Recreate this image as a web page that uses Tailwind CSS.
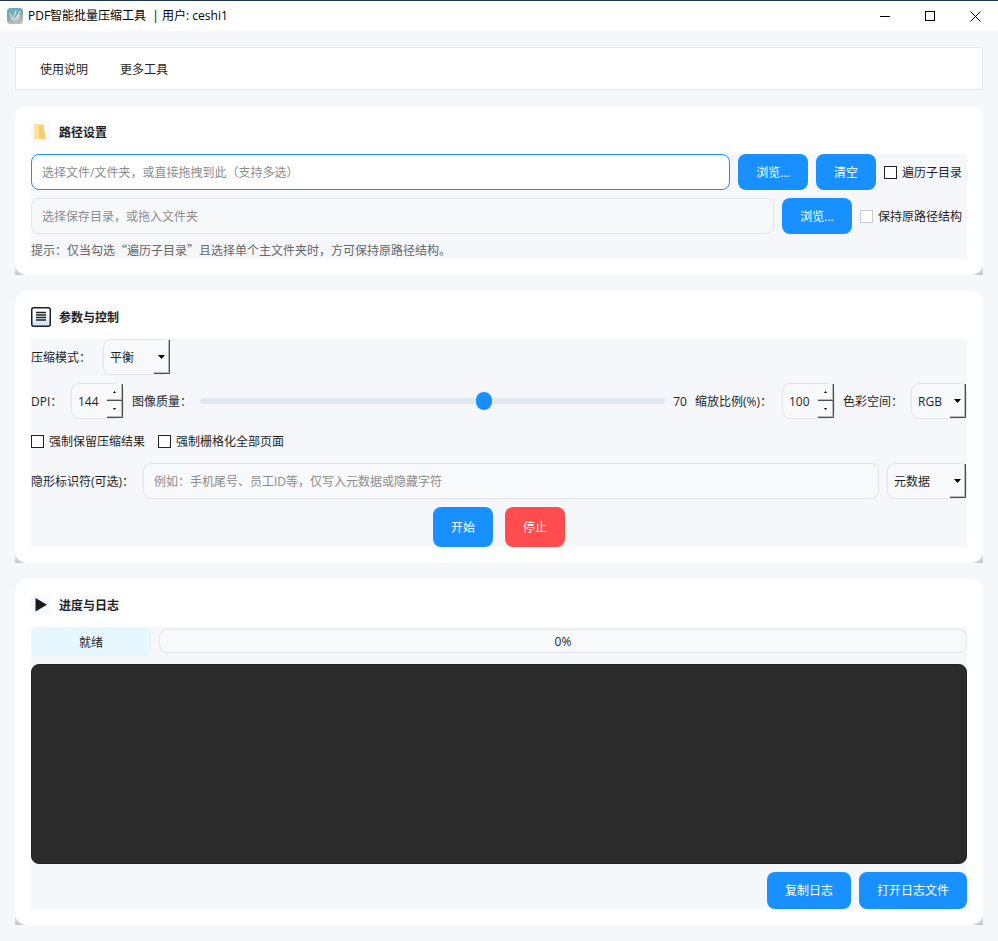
<!DOCTYPE html>
<html lang="zh-CN">
<head>
<meta charset="utf-8">
<meta name="viewport" content="width=device-width, initial-scale=1">
<title>PDF智能批量压缩工具</title>
<script src="https://cdn.jsdelivr.net/npm/@tailwindcss/browser@4"></script>
</head>
<body class="min-h-screen bg-[#f5f7fb] font-['Open_Sans','Noto_Sans_CJK_SC',sans-serif] text-xs leading-4 text-[#1f1f1f]">

<header class="flex h-[31px] items-center border-t border-[#1d3557] bg-white pl-[7px] text-black">
  <svg class="mr-[5px] size-4" viewBox="0 0 16 16" aria-hidden="true">
    <defs><linearGradient id="app" x1="0" y1="0" x2=".3" y2="1"><stop offset="0" stop-color="#5fb0cc"/><stop offset=".5" stop-color="#7fa3b0"/><stop offset="1" stop-color="#c4bab2"/></linearGradient></defs>
    <rect width="16" height="16" rx="3.5" fill="url(#app)"/>
    <path d="M3 5.500c1 1 1.500 3 2 5.500M5 11.500C7 9 8 6 9 3M6.500 12.500c3-2 4.500-5.500 6.500-9M9 11.500c1.500-.5 3-2.500 3.500-4" fill="none" stroke="#dfecef" stroke-opacity=".85" stroke-width="1.200" stroke-linecap="round"/>
  </svg>
  <h1 class="flex-1 whitespace-pre">PDF智能批量压缩工具  | 用户: ceshi1</h1>
  <button type="button" aria-label="最小化" class="flex h-[30px] w-[45px] items-center justify-center"><svg class="size-[11px]" viewBox="0 0 11 11" shape-rendering="crispEdges"><path d="M0 5h10v1H0z"/></svg></button>
  <button type="button" aria-label="最大化" class="flex h-[30px] w-[45px] items-center justify-center"><svg class="size-[11px]" viewBox="0 0 11 11" shape-rendering="crispEdges"><path d="M.5.5h9v9h-9z" fill="none" stroke="#000"/></svg></button>
  <button type="button" aria-label="关闭" class="flex h-[30px] w-[45px] items-center justify-center"><svg class="size-[11px]" viewBox="0 0 11 11"><path d="m.5.5 10 10m0-10-10 10" fill="none" stroke="#000"/></svg></button>
</header>

<main class="flex flex-col gap-4 px-[15px] py-4">
  <nav class="flex h-[43px] items-center border border-[#e4e7ed] bg-white px-2">
    <a href="#help" class="px-4 pt-0.5">使用说明</a>
    <a href="#tools" class="px-4 pt-0.5">更多工具</a>
  </nav>

  <section class="bg-linear-to-t from-[#c4c5c8] to-[#f5f7fb] to-[12px]">
    <div class="rounded-xl bg-white p-4">
      <div class="mb-3 flex h-5 items-center gap-2">
        <span class="flex size-5 items-center justify-center bg-[#f8f9fc]">
          <svg class="size-5" viewBox="0 0 20 20" aria-hidden="true"><path d="M3.500 2.500H13v7l1.500 1V17h-11z" fill="#fbd775"/><path d="M3.500 2.500H6L8 4v13.500L3.500 16.500z" fill="#fde396"/><path d="M8 4.500 12 3v6l1.500 1.500V17H8z" fill="#f5cd6a"/></svg>
        </span>
        <h2 class="bg-[#f8f9fc] pt-0.5 font-bold">路径设置</h2>
      </div>
      <div class="flex flex-col gap-2 bg-[#f5f7fb]">
        <div class="flex items-center gap-2">
          <input type="text" aria-label="源文件路径" placeholder="选择文件/文件夹，或直接拖拽到此（支持多选）" class="h-9 min-w-0 flex-1 rounded-lg border border-[#1890ff] bg-white px-[10px] outline-none placeholder:text-[#8c8c8c]">
          <button type="button" class="h-9 w-[70px] rounded-lg bg-[#1890ff] pt-0.5 text-white">浏览...</button>
          <button type="button" class="h-9 w-[60px] rounded-lg bg-[#1890ff] pt-0.5 text-white">清空</button>
          <label class="flex items-center gap-[5px] pr-[5px]"><input type="checkbox" class="size-[13px] appearance-none border border-[#222] bg-white checked:bg-[#1890ff]"><span class="pt-0.5">遍历子目录</span></label>
        </div>
        <div class="flex items-center gap-2">
          <input type="text" aria-label="保存目录" placeholder="选择保存目录，或拖入文件夹" class="h-9 min-w-0 flex-1 rounded-lg border border-[#e1e4e8] bg-[#f6f8fa] px-[10px] outline-none placeholder:text-[#8c8c8c]">
          <button type="button" class="h-9 w-[70px] rounded-lg bg-[#1890ff] pt-0.5 text-white">浏览...</button>
          <label class="flex items-center gap-[5px] pr-[5px]"><input type="checkbox" disabled class="size-[13px] appearance-none border border-[#ccc] bg-white"><span class="pt-0.5">保持原路径结构</span></label>
        </div>
        <p class="pb-px font-['Noto_Sans_CJK_SC',sans-serif] text-[#666]">提示：仅当勾选“遍历子目录”且选择单个主文件夹时，方可保持原路径结构。</p>
      </div>
    </div>
  </section>

  <section class="bg-linear-to-t from-[#c4c5c8] to-[#f5f7fb] to-[12px]">
    <div class="rounded-xl bg-white p-4">
      <div class="mb-3 flex h-5 items-center gap-2">
        <svg class="size-5" viewBox="0 0 20 20" aria-hidden="true">
          <defs><linearGradient id="doc" x1="0" y1="0" x2="0" y2="1"><stop offset=".4" stop-color="#fff"/><stop offset="1" stop-color="#c6e0f8"/></linearGradient></defs>
          <rect x=".75" y=".75" width="18.500" height="18.500" rx="2" fill="url(#doc)" stroke="#1b1f27" stroke-width="1.500"/>
          <path d="M5 5.500h10M5 8h10M5 10.500h10M5 13h10" stroke="#222" stroke-width="1.300"/>
        </svg>
        <h2 class="bg-[#f8f9fc] pt-0.5 font-bold">参数与控制</h2>
      </div>
      <div class="flex flex-col gap-2 bg-[#f5f7fb]">
        <div class="flex items-center gap-2">
          <label for="mode" class="w-16 pt-0.5">压缩模式：</label>
          <div class="relative h-9 w-[67px]">
            <select id="mode" class="h-9 w-full appearance-none rounded-lg border border-[#e1e4e8] bg-[#f8f9fa] pt-0.5 pl-[6px] outline-none"><option>平衡</option></select>
            <span class="pointer-events-none absolute right-0 top-px flex h-[34px] w-4 items-center justify-center border-r border-b border-[#505050] bg-[#f8f9fa] shadow-[inset_-1px_-1px_#b8b8b8]"><svg class="h-1 w-[7px]" viewBox="0 0 7 4"><path d="M0 0h7L3.500 4z"/></svg></span>
          </div>
        </div>
        <div class="flex items-center gap-2">
          <label for="dpi" class="w-8 whitespace-nowrap pt-0.5">DPI：</label>
          <div class="relative h-9 w-[53px]">
            <input id="dpi" type="text" inputmode="numeric" value="144" class="h-9 w-full rounded-lg border border-[#e1e4e8] bg-[#f8f9fa] pl-[6px] outline-none">
            <div class="absolute right-px top-px flex w-4 flex-col">
              <button type="button" aria-label="增大DPI" class="flex h-[17px] items-center justify-center border-r border-b border-[#505050] bg-[#f8f9fa] shadow-[inset_-1px_-1px_#b8b8b8]"><svg class="h-[2px] w-[3px]" viewBox="0 0 3 2"><path d="M0 2h3L1.500 0z"/></svg></button>
              <button type="button" aria-label="减小DPI" class="flex h-[17px] items-center justify-center border-r border-b border-[#505050] bg-[#f8f9fa] shadow-[inset_-1px_-1px_#b8b8b8]"><svg class="h-[2px] w-[3px]" viewBox="0 0 3 2"><path d="M0 0h3L1.500 2z"/></svg></button>
            </div>
          </div>
          <label for="quality" class="pt-0.5">图像质量：</label>
          <input id="quality" type="range" min="30" max="95" value="70" class="h-[6px] min-w-0 flex-1 appearance-none rounded-[3px] bg-[#e2e8f0] outline-none [&::-webkit-slider-thumb]:h-[18px] [&::-webkit-slider-thumb]:w-4 [&::-webkit-slider-thumb]:appearance-none [&::-webkit-slider-thumb]:rounded-lg [&::-webkit-slider-thumb]:bg-[#1890ff]">
          <output for="quality" class="pt-0.5">70</output>
          <label for="scale" class="w-[79px] whitespace-nowrap pt-0.5">缩放比例(%)：</label>
          <div class="relative h-9 w-[53px]">
            <input id="scale" type="text" inputmode="numeric" value="100" class="h-9 w-full rounded-lg border border-[#e1e4e8] bg-[#f8f9fa] pl-[6px] outline-none">
            <div class="absolute right-px top-px flex w-4 flex-col">
              <button type="button" aria-label="增大比例" class="flex h-[17px] items-center justify-center border-r border-b border-[#505050] bg-[#f8f9fa] shadow-[inset_-1px_-1px_#b8b8b8]"><svg class="h-[2px] w-[3px]" viewBox="0 0 3 2"><path d="M0 2h3L1.500 0z"/></svg></button>
              <button type="button" aria-label="减小比例" class="flex h-[17px] items-center justify-center border-r border-b border-[#505050] bg-[#f8f9fa] shadow-[inset_-1px_-1px_#b8b8b8]"><svg class="h-[2px] w-[3px]" viewBox="0 0 3 2"><path d="M0 0h3L1.500 2z"/></svg></button>
            </div>
          </div>
          <label for="space" class="pt-0.5">色彩空间：</label>
          <div class="relative h-9 w-14">
            <select id="space" class="h-9 w-full appearance-none rounded-lg border border-[#e1e4e8] bg-[#f8f9fa] pt-0.5 pl-[6px] outline-none"><option>RGB</option></select>
            <span class="pointer-events-none absolute right-px top-px flex h-[34px] w-4 items-center justify-center border-r border-b border-[#505050] bg-[#f8f9fa] shadow-[inset_-1px_-1px_#b8b8b8]"><svg class="h-1 w-[7px]" viewBox="0 0 7 4"><path d="M0 0h7L3.500 4z"/></svg></span>
          </div>
        </div>
        <div class="flex h-7 items-center gap-2">
          <label class="flex items-center gap-[5px] pr-[5px]"><input type="checkbox" class="size-[13px] appearance-none border border-[#222] bg-white checked:bg-[#1890ff]"><span class="pt-0.5">强制保留压缩结果</span></label>
          <label class="flex items-center gap-[5px] pr-[5px]"><input type="checkbox" class="size-[13px] appearance-none border border-[#222] bg-white checked:bg-[#1890ff]"><span class="pt-0.5">强制栅格化全部页面</span></label>
        </div>
        <div class="flex items-center gap-2">
          <label for="mark" class="w-[104px] whitespace-nowrap pt-0.5">隐形标识符(可选)：</label>
          <input id="mark" type="text" placeholder="例如：手机尾号、员工ID等，仅写入元数据或隐藏字符" class="h-9 min-w-0 flex-1 rounded-lg border border-[#e1e4e8] bg-[#f8f9fa] px-[10px] outline-none placeholder:text-[#8c8c8c]">
          <div class="relative h-9 w-20">
            <select aria-label="写入方式" class="h-9 w-full appearance-none rounded-lg border border-[#e1e4e8] bg-[#f8f9fa] pt-0.5 pl-[6px] outline-none"><option>元数据</option></select>
            <span class="pointer-events-none absolute right-px top-px flex h-[34px] w-4 items-center justify-center border-r border-b border-[#505050] bg-[#f8f9fa] shadow-[inset_-1px_-1px_#b8b8b8]"><svg class="h-1 w-[7px]" viewBox="0 0 7 4"><path d="M0 0h7L3.500 4z"/></svg></span>
          </div>
        </div>
        <div class="flex justify-center gap-3">
          <button type="button" class="h-10 w-[60px] rounded-lg bg-[#1890ff] pt-0.5 text-white">开始</button>
          <button type="button" class="h-10 w-[60px] rounded-lg bg-[#ff4d4f] pt-0.5 text-white">停止</button>
        </div>
      </div>
    </div>
  </section>

  <section class="bg-linear-to-t from-[#c4c5c8] to-[#f5f7fb] to-[12px]">
    <div class="rounded-xl bg-white p-4">
      <div class="mb-3 flex h-5 items-center gap-2">
        <svg class="size-5 bg-[#f8f9fc]" viewBox="0 0 20 20" aria-hidden="true"><path d="M4.500 3v13.500L16 9.700z" fill="#1a1a1a"/></svg>
        <h2 class="bg-[#f8f9fc] pt-0.5 font-bold">进度与日志</h2>
      </div>
      <div class="flex flex-col gap-2 bg-[#f5f7fb]">
        <div class="flex items-center gap-2">
          <span class="flex h-[29px] w-[120px] items-center justify-center rounded-md bg-[#e6f7ff] pt-0.5">就绪</span>
          <div role="progressbar" aria-label="进度" aria-valuenow="0" aria-valuemin="0" aria-valuemax="100" class="mb-px flex h-6 flex-1 items-center justify-center rounded-lg border border-[#e1e4e8] bg-[#f8f9fa] pt-px">0%</div>
        </div>
        <textarea readonly aria-label="日志" class="block h-[200px] w-full resize-none rounded-lg border border-[#222] bg-[#2b2b2b] p-2 text-white outline-none"></textarea>
        <div class="flex justify-end gap-2">
          <button type="button" class="h-[37px] w-[84px] rounded-lg bg-[#1890ff] pt-px text-white">复制日志</button>
          <button type="button" class="h-[37px] w-[108px] rounded-lg bg-[#1890ff] pt-px text-white">打开日志文件</button>
        </div>
      </div>
    </div>
  </section>
</main>
</body>
</html>
